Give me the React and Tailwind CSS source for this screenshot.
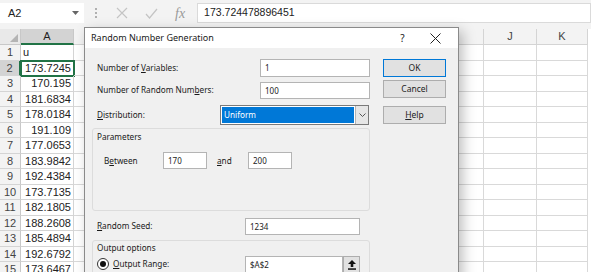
import React from 'react'

const rows = [
  ['1', 'u'],
  ['2', '173.7245'],
  ['3', '170.195'],
  ['4', '181.6834'],
  ['5', '178.0184'],
  ['6', '191.109'],
  ['7', '177.0653'],
  ['8', '183.9842'],
  ['9', '192.4384'],
  ['10', '173.7135'],
  ['11', '182.1805'],
  ['12', '188.2608'],
  ['13', '185.4894'],
  ['14', '192.6792'],
  ['15', '173.6467'],
]

// columns after A (B..I sit under the dialog, so their letters are never seen)
const cols = [
  ['', 51], ['', 51], ['', 51], ['', 51], ['', 51], ['', 51], ['', 52], ['', 52], ['J', 53], ['K', 51],
]

const FormulaBar = () => (
  <div className="flex h-[29px] items-start bg-[#f3f3f3] pt-[3px]">
    <div className="flex h-[20px] w-[84px] items-center justify-between bg-white pl-[8px] pr-[5px] text-[11px] text-[#222]">
      <span>A2</span>
      <svg width="7" height="4" viewBox="0 0 7 4"><path d="M0 0 L7 0 L3.5 4 Z" fill="#666" /></svg>
    </div>
    <div className="ml-[11px] flex h-[20px] flex-col justify-center gap-[2px]">
      <span className="block h-[2px] w-[2px] bg-[#b0b0b0]" />
      <span className="block h-[2px] w-[2px] bg-[#b0b0b0]" />
      <span className="block h-[2px] w-[2px] bg-[#b0b0b0]" />
    </div>
    <div className="ml-[19px] flex h-[20px] items-center">
      <svg width="12" height="12" viewBox="0 0 12 12"><path d="M1 1 L11 11 M11 1 L1 11" stroke="#c4c4c4" strokeWidth="1.2" /></svg>
    </div>
    <div className="ml-[17px] flex h-[20px] items-center">
      <svg width="13" height="11" viewBox="0 0 13 11"><path d="M1 6 L4.5 10 L12 1" stroke="#c4c4c4" strokeWidth="1.2" fill="none" /></svg>
    </div>
    <div className="ml-[17px] flex h-[20px] items-center font-['Liberation_Serif',serif] text-[14px] italic text-[#999]">
      fx
    </div>
    <div className="ml-[12px] flex h-[20px] flex-1 items-center border border-[#dadada] bg-white pl-[6px] text-[10.5px] text-[#222]">
      173.724478896451
    </div>
  </div>
)

const Sheet = () => (
  <div className="text-[11px] text-[#222]">
    <div className="flex h-[16px]">
      <div className="relative w-[21px] border-r border-b border-[#c8c8c8] bg-[#e9e9e9]">
        <svg className="absolute right-[2px] bottom-[2px]" width="8" height="8" viewBox="0 0 8 8"><path d="M8 0 L8 8 L0 8 Z" fill="#b4b4b4" /></svg>
      </div>
      <div className="flex w-[53px] items-center justify-center border-r border-b-2 border-r-[#c8c8c8] border-b-[#217346] bg-[#d3d3d3] text-[#1f1f1f]">A</div>
      {cols.map(([c, w], i) => (
        <div key={i} style={{ width: w }} className="flex shrink-0 items-center justify-center border-r border-b border-[#d4d4d4] bg-[#f3f3f3] text-[#444]">{c}</div>
      ))}
    </div>
    {rows.map(([n, v], i) => (
      <div key={n} className="flex h-[15.5px]">
        <div className={`flex w-[21px] shrink-0 items-center justify-center border-b border-[#d4d4d4] ${i === 1 ? 'border-r-2 border-r-[#217346] bg-[#d3d3d3]' : 'border-r border-r-[#c8c8c8] bg-[#f3f3f3]'} text-[#444]`}>{n}</div>
        <div className={`flex w-[53px] shrink-0 items-center border-r border-b border-[#d4d4d4] px-[2px] ${i === 0 ? 'justify-start' : 'justify-end'} ${i === 1 ? 'outline-2 -outline-offset-1 outline-[#217346]' : ''}`}>{v}</div>
        {cols.map(([c, w], j) => (
          <div key={j} style={{ width: w }} className="shrink-0 border-r border-b border-[#d9d9d9]" />
        ))}
      </div>
    ))}
  </div>
)

const Input = ({ value, className }) => (
  <div className={`flex items-center border border-[#b4b4b4] bg-white pl-[4px] text-[8px] text-[#222] ${className}`}>{value}</div>
)

const Btn = ({ children, className }) => (
  <div className={`flex h-[18px] w-[63px] items-center justify-center border bg-[#e1e1e1] text-[8.5px] text-[#222] ${className}`}>{children}</div>
)

const Dialog = () => (
  <div className="absolute left-[84px] top-[27px] h-[260px] w-[375px] border border-[#8a8a8a] bg-[#f0f0f0] font-['Noto_Sans',sans-serif] text-[8.2px] text-[#1a1a1a] shadow-[4px_4px_12px_rgba(0,0,0,0.25)]">
    <div className="flex h-[20px] items-center bg-white pl-[6px] text-[9px]">
      <span className="flex-1">Random Number Generation</span>
      <span className="w-[35px] text-center text-[10px]">?</span>
      <span className="mr-[8px] flex w-[30px] justify-center">
        <svg width="11" height="11" viewBox="0 0 11 11"><path d="M0.5 0.5 L10.5 10.5 M10.5 0.5 L0.5 10.5" stroke="#222" strokeWidth="1" /></svg>
      </span>
    </div>
    <div className="flex pt-[11px] pl-[7px]">
      <div className="w-[278px]">
        <div className="flex h-[18px] items-center justify-between">
          <span className="pl-[5px]">Number of <u>V</u>ariables:</span>
          <Input value="1" className="h-[18px] w-[110px]" />
        </div>
        <div className="mt-[5px] flex h-[17px] items-center justify-between">
          <span className="pl-[5px]">Number of Random Num<u>b</u>ers:</span>
          <Input value="100" className="h-[17px] w-[110px]" />
        </div>
        <div className="mt-[6px] flex h-[20px] items-center justify-between">
          <span className="pl-[5px]"><u>D</u>istribution:</span>
          <div className="mr-[1px] flex h-[20px] w-[149px] border border-[#7a7a7a] bg-white">
            <div className="m-[1px] flex flex-1 items-center bg-[#0078d7] pl-[2px] text-white">Uniform</div>
            <div className="flex w-[13px] items-center justify-center border-l border-[#b4b4b4] bg-[#e6e6e6]">
              <svg width="7" height="4" viewBox="0 0 7 4"><path d="M0.5 0.5 L3.5 3.5 L6.5 0.5" stroke="#555" fill="none" /></svg>
            </div>
          </div>
        </div>
        <div className="mt-[3px] h-[83px] rounded-[3px] border border-[#dcdcdc]">
          <div className="pl-[4px] pt-[2px]">Parameters</div>
          <div className="mt-[9px] flex h-[17px] items-center">
            <span className="w-[70px] pl-[11px]">B<u>e</u>tween</span>
            <Input value="170" className="h-[17px] w-[44px]" />
            <span className="w-[41px] pl-[10px]"><u>a</u>nd</span>
            <Input value="200" className="h-[17px] w-[44px]" />
          </div>
        </div>
        <div className="mt-[7px] flex h-[17px] items-center justify-between">
          <span className="pl-[5px]"><u>R</u>andom Seed:</span>
          <Input value="1234" className="mr-[10px] h-[17px] w-[115px]" />
        </div>
        <div className="mt-[5px] h-[40px] rounded-[3px] border border-[#dcdcdc]">
          <div className="pl-[4px] leading-[14px]">Output options</div>
          <div className="mt-[1px] flex h-[17px] items-center justify-between">
            <div className="flex items-center pl-[4px]">
              <div className="flex h-[12px] w-[12px] items-center justify-center rounded-full border border-[#333] bg-white">
                <div className="h-[6px] w-[6px] rounded-full bg-[#111]" />
              </div>
              <span className="ml-[4px]"><u>O</u>utput Range:</span>
            </div>
            <div className="mr-[9px] flex">
              <Input value="$A$2" className="h-[17px] w-[98px]" />
              <div className="flex h-[17px] w-[17px] items-center justify-center border border-[#adadad] bg-[#e1e1e1]">
                <svg width="8" height="10" viewBox="0 0 8 10"><path d="M4 0 L8 4 L5.3 4 L5.3 7 L2.7 7 L2.7 4 L0 4 Z" fill="#111" /><rect x="0" y="8.3" width="8" height="1.5" fill="#111" /></svg>
              </div>
            </div>
          </div>
        </div>
      </div>
      <div className="ml-[13px] flex flex-col">
        <Btn className="border-[#0078d7]">OK</Btn>
        <Btn className="mt-[3px] border-[#adadad]">Cancel</Btn>
        <Btn className="mt-[8px] border-[#adadad]"><u>H</u>elp</Btn>
      </div>
    </div>
  </div>
)

export default function App() {
  return (
    <div className="relative h-[272px] w-[591px] overflow-hidden bg-white font-['Liberation_Sans',sans-serif]">
      <FormulaBar />
      <Sheet />
      <Dialog />
    </div>
  )
}
